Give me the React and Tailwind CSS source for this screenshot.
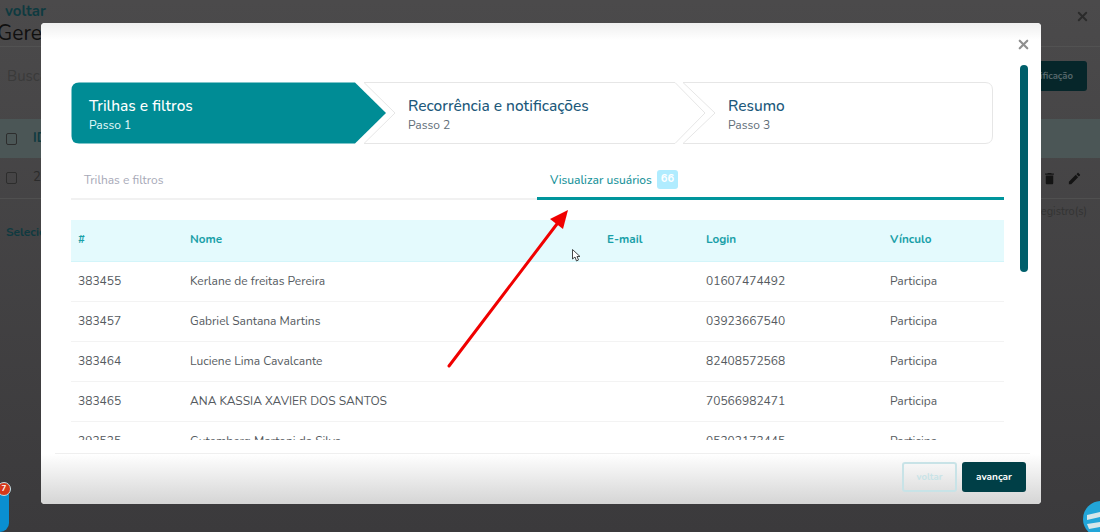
import React from "react";
import { X } from "lucide-react";

const rows = [
  ["383455", "Kerlane de freitas Pereira", "01607474492"],
  ["383457", "Gabriel Santana Martins", "03923667540"],
  ["383464", "Luciene Lima Cavalcante", "82408572568"],
  ["383465", "ANA KASSIA XAVIER DOS SANTOS", "70566982471"],
  ["393535", "Gutemberg Martoni da Silva", "05303173445"],
];

function Step({ title, sub, active, className }) {
  return (
    <div className={"flex flex-col justify-center shrink-0 pt-[3px] " + className}>
      <div className={"text-[15.5px] leading-[20px] font-medium " + (active ? "text-white" : "text-[#20587a]")}>{title}</div>
      <div className={"text-[12px] leading-[16px] mt-[1px] " + (active ? "text-[#e6fbfb]" : "text-[#5f6d78]")}>{sub}</div>
    </div>
  );
}

function Background() {
  return (
    <div className="h-[532px] bg-gradient-to-b from-[#4b4a4b] to-[#3b3a3c] flex flex-col overflow-hidden">
      <div className="h-[47px] border-b border-[#525252] pl-[5px] pr-[10px] relative shrink-0">
        <div className="text-[15px] leading-[16px] font-bold text-[#0f3a40] pt-[3px] h-[21px]">voltar</div>
        <div className="text-[21px] leading-[24px] text-[#101010] -ml-[8px]">Gerenciar notificações</div>
        <X className="absolute right-[10px] top-[9px] text-[#2b2b2b]" size={15} strokeWidth={3} />
      </div>
      <div className="flex justify-between items-center mt-[14px] h-[30px] pl-[7px] pr-[13px] shrink-0">
        <div className="text-[15px] text-[#3a3a3a]">Buscar</div>
        <div className="h-[30px] w-[120px] rounded-[3px] bg-[#06262a] text-[9.5px] font-bold text-[#55666a] flex items-center justify-end pr-[14px]">Nova notificação</div>
      </div>
      <div className="mt-[28px] h-[39px] bg-[#4b5656] flex items-center pl-[6px] gap-[16px] text-[13px] font-bold text-[#0f3a40] shrink-0">
        <div className="w-[11px] h-[12px] rounded-[2px] border border-[#2d2d2d]" />
        <span>ID</span>
      </div>
      <div className="h-[41px] border-b border-[#505050] flex items-center justify-between pl-[6px] pr-[18px] text-[#2b2b2b] shrink-0">
        <div className="flex items-center gap-[16px] text-[13px]">
          <div className="w-[11px] h-[12px] rounded-[2px] border border-[#2d2d2d]" />
          <span>2</span>
        </div>
        <div className="flex items-center gap-[10px]">
          <svg width="15" height="15" viewBox="0 0 24 24" fill="#141414">
            <path d="M6 19c0 1.1.9 2 2 2h8c1.1 0 2-.9 2-2V7H6v12zM19 4h-3.5l-1-1h-5l-1 1H5v2h14V4z" />
          </svg>
          <svg width="15" height="15" viewBox="0 0 24 24" fill="#141414">
            <path d="M3 17.25V21h3.75L17.81 9.94l-3.75-3.75L3 17.25zM20.71 7.04c.39-.39.39-1.02 0-1.41l-2.34-2.34c-.39-.39-1.02-.39-1.41 0l-1.83 1.83 3.75 3.75 1.83-1.83z" />
          </svg>
        </div>
      </div>
      <div className="flex justify-between pl-[6px] pr-[13px] mt-[5px] text-[11px] leading-[16px]">
        <span className="text-[#0f3a40] font-bold mt-[20px] text-[12px]">Selecionados</span>
        <span className="text-[#333333]">0 registro(s)</span>
      </div>
    </div>
  );
}

export default function App() {
  return (
    <div className="relative h-[532px] w-[1100px] overflow-hidden font-['Nunito','Noto_Sans','Open_Sans',sans-serif]">
      <Background />

      {/* chat widget */}
      <div className="absolute left-0 bottom-0 w-[9px] h-[38px] bg-[#0a8fd1] rounded-br-[9px]" />
      <div className="absolute left-[-3px] top-[482px] w-[14px] h-[14px] rounded-full bg-[#d5391a] border border-[#bfe1ea] text-white text-[8px] font-bold flex items-center justify-center">7</div>
      <svg className="absolute left-[1082px] top-[500px]" width="18" height="32" viewBox="0 0 18 32">
        <circle cx="19" cy="19" r="18" fill="#22a5d8" />
        <path d="M5 15 L18 12 V17 L5 20 Z" fill="#d6e6ea" />
        <path d="M5 24 L18 22 V27 L7 29 Z" fill="#d6e6ea" />
      </svg>

      {/* modal */}
      <div className="absolute left-[41px] top-[23px] w-[1000px] h-[481px] bg-white rounded-[4px] flex flex-col overflow-hidden">
        <div className="h-[17px] bg-gradient-to-b from-[#efefef] to-white shrink-0" />
        <div className="flex-1 min-h-0 relative pl-[30px] pr-[37px] pt-[42px]">
          <X className="absolute right-[10px] top-[-3px] text-[#8f8f8f]" size={15} strokeWidth={3.5} />
          <div className="absolute left-[979px] top-[25px] w-[8px] h-[207px] rounded-full bg-[#005f6b]" />

          {/* stepper */}
          <div className="relative h-[62px] w-[922px] flex">
            <svg className="absolute inset-0" width="922" height="62" viewBox="0 0 922 62">
              <path d="M8 0.5 H284 L315 31 L284 61.5 H8 Q0.5 61.5 0.5 54 V8 Q0.5 0.5 8 0.5 Z" fill="#008c95" />
              <path d="M293 0.5 H604 L634 31 L604 61.5 H293 L324 31 Z" fill="none" stroke="#e6e6e6" />
              <path d="M612 0.5 H914 Q921.5 0.5 921.5 8 V54 Q921.5 61.5 914 61.5 H612 L644 31 Z" fill="none" stroke="#e6e6e6" />
            </svg>
            <Step className="relative w-[320px] pl-[18px]" title="Trilhas e filtros" sub="Passo 1" active />
            <Step className="relative w-[320px] pl-[17px]" title="Recorrência e notificações" sub="Passo 2" />
            <Step className="relative w-[282px] pl-[17px]" title="Resumo" sub="Passo 3" />
          </div>

          {/* tabs */}
          <div className="flex w-[933px] h-[40px] mt-[16px] text-[12px]">
            <div className="w-[466px] border-b-2 border-[#f1f1f1] pl-[13px] pt-[11px] text-[#a7a9b7]">Trilhas e filtros</div>
            <div className="flex-1 border-b-[3px] border-[#00959c] pl-[13px] pt-[10px] text-[#18929a] font-medium">
              <span className="inline-flex items-center gap-[5px]">
                Visualizar usuários
                <span className="w-[21px] h-[19px] rounded-[3px] bg-[#b0ecff] text-white text-[11px] font-bold flex items-center justify-center">66</span>
              </span>
            </div>
          </div>

          {/* table */}
          <div className="mt-[20px] w-[933px] h-[220px] overflow-hidden">
            <table className="table-fixed w-[933px] text-left text-[12px]">
              <colgroup>
                <col className="w-[112px]" />
                <col className="w-[417px]" />
                <col className="w-[99px]" />
                <col className="w-[184px]" />
                <col className="w-[121px]" />
              </colgroup>
              <thead>
                <tr className="h-[41px] bg-[#e4fafd] border-b border-[#d3f5fa] text-[#19a0a8] text-[11.7px]">
                  <th className="pl-[7px] font-bold">#</th>
                  <th className="pl-[7px] font-bold">Nome</th>
                  <th className="pl-[7px] font-bold">E-mail</th>
                  <th className="pl-[7px] font-bold">Login</th>
                  <th className="pl-[7px] font-bold">Vínculo</th>
                </tr>
              </thead>
              <tbody className="text-[#555a60]">
                {rows.map((r) => (
                  <tr key={r[0]} className="h-[40px] border-b border-[#f3f3f3]">
                    <td className="pl-[7px]">{r[0]}</td>
                    <td className="pl-[7px]">{r[1]}</td>
                    <td className="pl-[7px]"></td>
                    <td className="pl-[7px]">{r[2]}</td>
                    <td className="pl-[7px]">Participa</td>
                  </tr>
                ))}
              </tbody>
            </table>
          </div>
        </div>

        {/* footer */}
        <div className="h-[51px] shrink-0 ml-[14px] mr-[11px] border-t border-[#efefef] bg-white" />
      </div>
      <div className="absolute left-[41px] top-[454px] w-[1000px] h-[50px] rounded-b-[4px] bg-gradient-to-b from-white to-[#d5d5d5] flex items-center justify-end gap-[5px] pr-[15px] pb-[4px]">
        <button className="w-[55px] h-[30px] rounded-[3px] border-2 border-[#c8e3e7] text-[#c8e3e7] text-[9.5px] font-bold">voltar</button>
        <button className="w-[64px] h-[30px] rounded-[3px] bg-[#003f47] text-white text-[10px] font-bold">avançar</button>
      </div>

      {/* annotation */}
      <svg className="absolute left-[440px] top-[200px]" width="140" height="175" viewBox="0 0 140 175">
        <path d="M9 166 L120 20" stroke="#f00000" strokeWidth="3" strokeLinecap="round" />
        <path d="M128 10 L123 29 L110 19 Z" fill="#f00000" />
      </svg>
      <svg className="absolute left-[572px] top-[249px]" width="9" height="13" viewBox="0 0 9 13">
        <path d="M0.5 0.5 V10 L3 8 L4.5 12 L6.5 11 L5 7.5 H8 Z" fill="#ffffff" stroke="#333333" strokeWidth="0.9" />
      </svg>
    </div>
  );
}
